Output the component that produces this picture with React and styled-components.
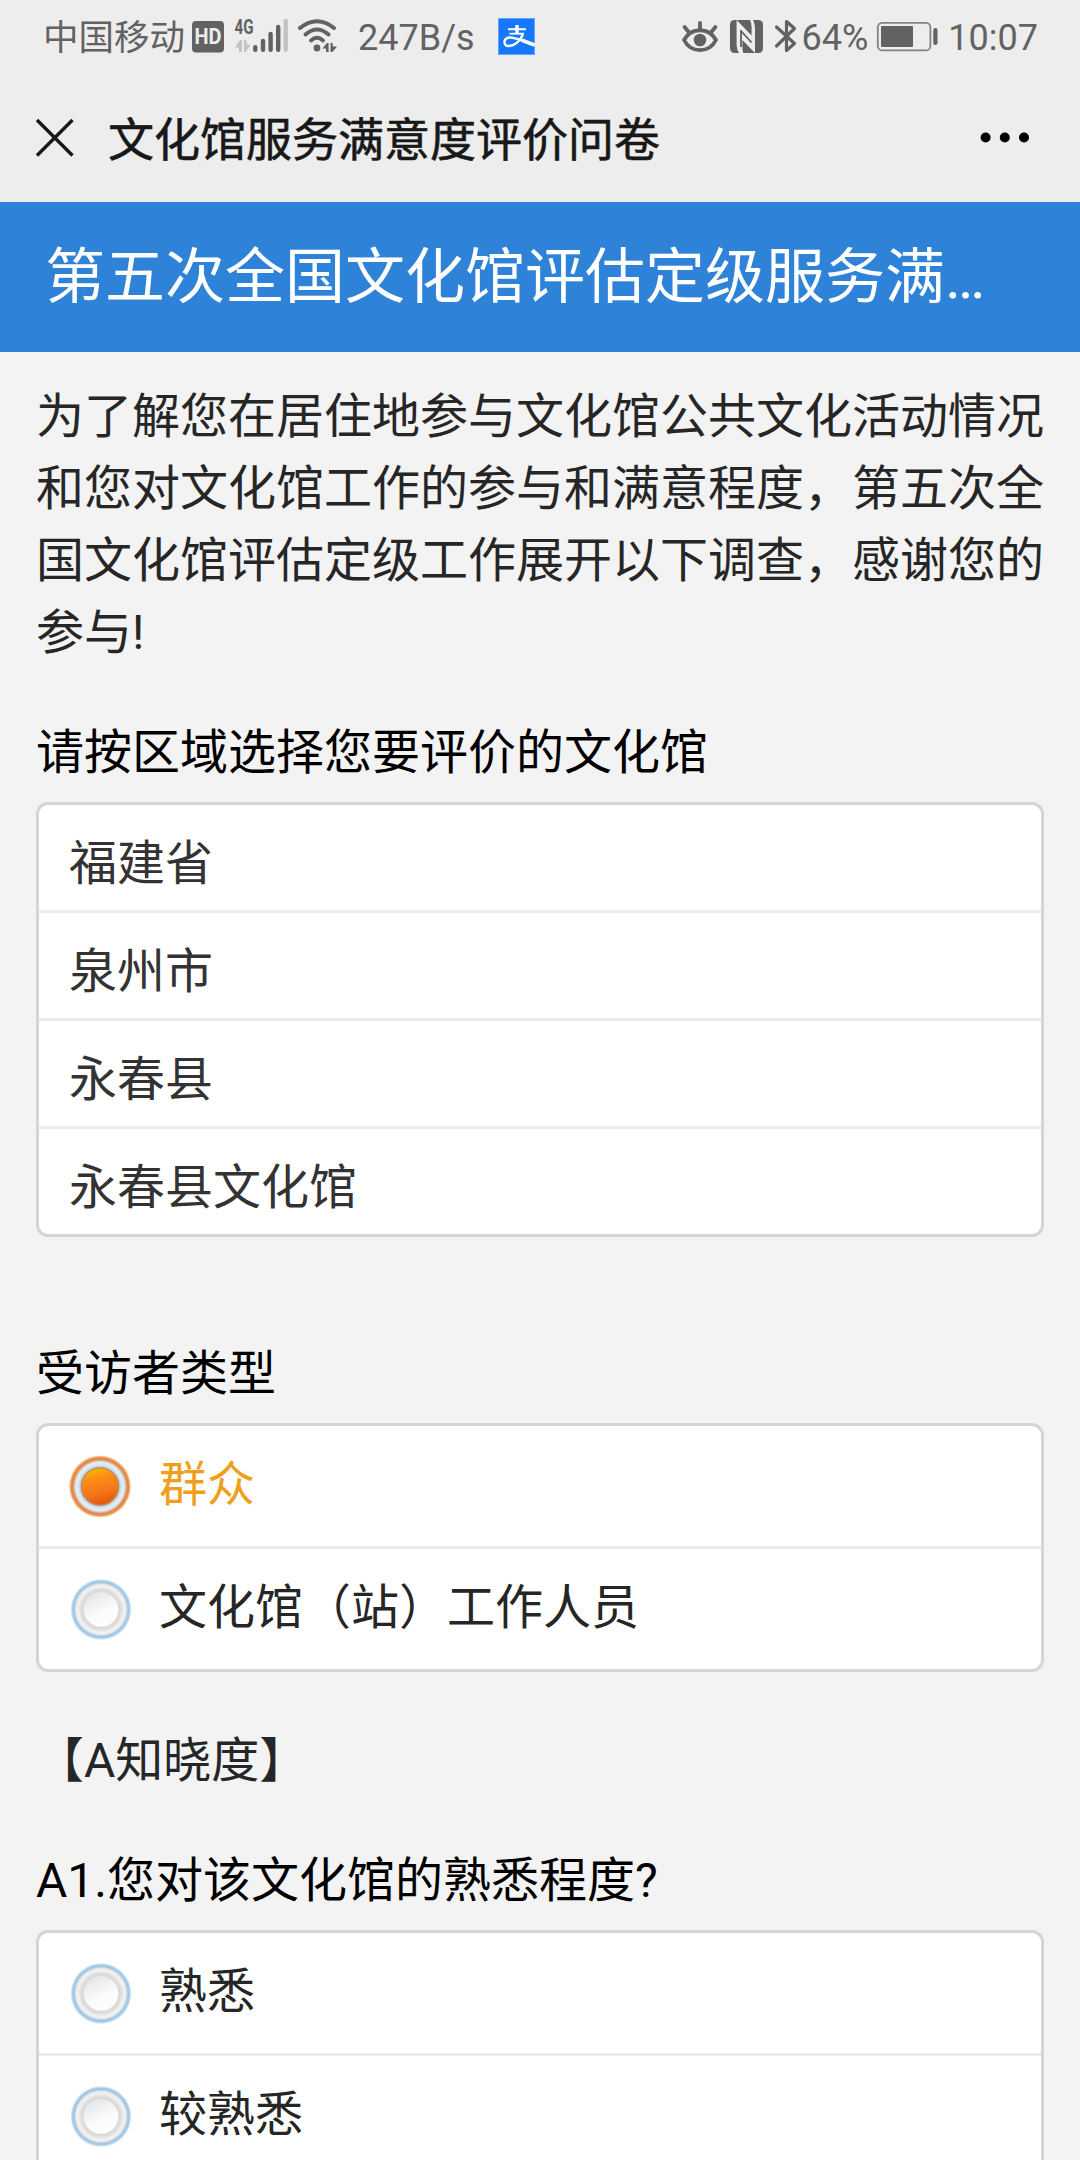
import React, { useState } from 'react';
import styled, { createGlobalStyle } from 'styled-components';

const GlobalStyle = createGlobalStyle`
  * {
    box-sizing: border-box;
  }

  body {
    margin: 0;
    background: #f3f3f3;
    font-family: Roboto, 'Noto Sans CJK SC', sans-serif;
  }
`;

const Styled = {
  Page: styled.div`
    width: 1080px;
    height: 2160px;
    overflow: hidden;
    background: #f3f3f3;
  `,
  StatusBar: styled.div`
    display: flex;
    justify-content: space-between;
    height: 74px;
    padding: 0 42px 0 43px;
    background: #ededed;
    color: #626262;
    font-size: 36px;
    line-height: 76px;
    white-space: nowrap;
  `,
  StatusGroup: styled.div`
    display: flex;

    svg {
      display: block;
      flex-shrink: 0;
      height: 74px;
    }
  `,
  Carrier: styled.span`
    margin-right: 7px;
    font-size: 35.5px;
    line-height: 77px;
  `,
  Speed: styled.span`
    margin-left: 20px;
  `,
  NavBar: styled.div`
    display: flex;
    align-items: center;
    height: 128px;
    padding: 0 46px 0 33px;
    background: #ededed;
  `,
  NavTitle: styled.div`
    flex-grow: 1;
    margin-left: 32px;
    padding-top: 4px;
    color: #181818;
    font-size: 46px;
    font-weight: 400;
    line-height: 72px;
    -webkit-text-stroke: 0.6px #181818;
  `,
  Banner: styled.h1`
    height: 150px;
    margin: 0;
    padding: 0 45px;
    background: #2e82d8;
    color: #fff;
    font-size: 60px;
    font-weight: 400;
    line-height: 152px;
    white-space: nowrap;
  `,
  Form: styled.div`
    padding: 29px 36px 0;
  `,
  Intro: styled.p`
    margin: 0;
    color: #262626;
    font-size: 48px;
    line-height: 72px;
  `,
  Question: styled.h2`
    margin: ${props => props.$top}px 0 0;
    color: #000;
    font-size: 48px;
    font-weight: 400;
    line-height: 72px;
  `,
  Section: styled.div`
    margin-top: 53px;
    color: #262626;
    font-size: 48px;
    line-height: 72px;
  `,
  List: styled.div`
    margin-top: 13px;
    border: 3px solid #d5d5d5;
    border-radius: 12px;
    background: #fff;
    overflow: hidden;
  `,
  Row: styled.div`
    display: flex;
    align-items: center;
    height: ${props => (props.$tall ? 123 : 108)}px;
    padding: ${props => (props.$tall ? '0 30px' : '12px 30px 0')};
    border-bottom: 3px solid #ebebeb;
    color: ${props => (props.$active ? '#ef9f1c' : props.$tall ? '#262626' : '#333')};
    font-size: 48px;
    line-height: 72px;
    cursor: pointer;

    &:last-child {
      height: ${props => (props.$tall ? 120 : 105)}px;
      border-bottom: 0;
    }
  `,
  Label: styled.span`
    margin: -2px 0 0 26px;
  `
};

const HdIcon = () => (
  <svg width="32" height="74" viewBox="0 0 32 74">
    <rect y="21" width="32" height="31.5" rx="4" fill="#626262" />
    <text x="2.5" y="44.3" fontSize="21.5" fontWeight="700" fill="#ededed" textLength="27" lengthAdjust="spacingAndGlyphs">
      HD
    </text>
  </svg>
);

const SignalIcon = () => (
  <svg width="74" height="74" viewBox="0 0 74 74" fill="#626262">
    <text x="10.5" y="33.5" fontSize="20.5" fontWeight="700" textLength="19" lengthAdjust="spacingAndGlyphs">
      4G
    </text>
    <path d="M11 47.5 L16 40 H18 V52 H15 V47.5 Z M20 40 H22.5 V44.5 L26.5 45 L21.5 52 H20 Z" fill="#c3c3c3" />
    <g strokeWidth="4.4" strokeLinecap="round" stroke="#626262">
      <path d="M31.3 47.3 V49.8 M39 41 V49.8 M46.6 34 V49.8 M54.2 27 V49.8" />
      <path d="M61.7 21 V49.8" stroke="#c3c3c3" />
    </g>
  </svg>
);

const WifiIcon = () => (
  <svg width="40" height="74" viewBox="0 0 40 74" fill="#626262">
    <g fill="none" stroke="#626262" strokeWidth="4" strokeLinecap="round">
      <path d="M2 28 Q19 14.5 36 28" />
      <path d="M7.5 34.5 Q19 24.5 30.5 34.5" />
      <path d="M13 40.5 Q19 35 25 40.5" />
    </g>
    <circle cx="19" cy="48" r="3.4" />
    <path d="M24.5 48.5 L28.8 43 H30.6 V52 H28 V48.5 Z M32.5 43 H34.7 V46.3 L39 46.8 L34.3 52 H32.5 Z" />
  </svg>
);

const AlipayIcon = () => (
  <svg width="60" height="74" viewBox="1 0 60 74">
    <rect x="24.5" y="18.5" width="36" height="36" fill="#1677ff" stroke="#64a4fb" />
    <g fill="none" stroke="#fff">
      <path d="M43 25 V33.5" strokeWidth="3.4" />
      <path d="M34 29.2 H52" strokeWidth="2" />
      <path d="M35.5 33.7 H50" strokeWidth="1.8" />
      <path
        d="M49 33.5 C47 41 40 46 34.5 46 C29 46 29 38.5 35 37.5 C41 37 47 40.5 61 45"
        strokeWidth="2.4"
      />
      <path d="M48 40.3 L60.5 45" strokeWidth="3.8" />
    </g>
  </svg>
);

const EyeIcon = () => (
  <svg width="36" height="74" viewBox="0 0 36 74">
    <g fill="none" stroke="#626262" strokeWidth="3.8" strokeLinecap="round">
      <path d="M2 40 C9 27 27 27 34 40 C27 53.5 9 53.5 2 40 Z" />
      <path d="M2.6 27 L7 32.5 M18 23 V30 M33.4 27 L29 32.5" />
    </g>
    <circle cx="18" cy="40" r="6.3" fill="#626262" />
  </svg>
);

const NfcIcon = () => (
  <svg width="46" height="74" viewBox="0 0 46 74">
    <rect x="12" y="20" width="33" height="33" rx="4.5" fill="#626262" />
    <path
      d="M18.6 20 L33.6 35.5 V28 C33.6 25 33 22 32 20 H35 C36.5 23 37 26 37 29 V53 L24.4 40 V47 C24.4 50 24.8 52 25.4 53 H21 C19.2 50 18.6 47 18.6 44 Z"
      fill="#ededed"
    />
    <path d="M23 30 V47 M23 31 L33.6 42.5" fill="none" stroke="#626262" strokeWidth="1.8" />
  </svg>
);

const BluetoothIcon = () => (
  <svg width="38" height="74" viewBox="0 0 38 74">
    <path
      d="M12.5 27 L30.5 43.5 L22.5 50.5 V21.5 L30.5 28.5 L12.5 46"
      fill="none"
      stroke="#626262"
      strokeWidth="3.2"
      strokeLinecap="round"
      strokeLinejoin="round"
    />
  </svg>
);

const BatteryIcon = () => (
  <svg width="80" height="74" viewBox="0 0 80 74">
    <rect x="9.8" y="22.8" width="52.6" height="27.6" rx="4.5" fill="none" stroke="#828282" strokeWidth="1.8" />
    <rect x="13" y="26" width="32" height="21" rx="1" fill="#626262" />
    <rect x="65.3" y="28" width="4.2" height="17" rx="2" fill="#626262" />
  </svg>
);

const CloseIcon = () => (
  <svg width="43" height="43" viewBox="0 0 43 43">
    <path d="M4 3 L39.5 38.5 M39.5 3 L4 38.5" stroke="#181818" strokeWidth="3.4" />
  </svg>
);

const MoreIcon = () => (
  <svg width="60" height="12" viewBox="0 0 60 12">
    <circle cx="11.6" cy="5.5" r="5" />
    <circle cx="30.8" cy="5.5" r="5" />
    <circle cx="50" cy="5.5" r="5" />
  </svg>
);

const RadioIcon = ({ checked }) => (
  <svg width="64" height="64" viewBox="0 0 64 64">
    <defs>
      <radialGradient id="ring-on">
        <stop offset="0.6" stopColor="#b5bcc6" />
        <stop offset="0.7" stopColor="#dfe8f0" />
        <stop offset="0.78" stopColor="#e6ecf1" />
        <stop offset="0.83" stopColor="#c9c4c2" />
        <stop offset="0.87" stopColor="#e08a4e" />
        <stop offset="0.93" stopColor="#ee8c3c" />
        <stop offset="1" stopColor="#fdeadb" />
      </radialGradient>
      <linearGradient id="dot-on" x1="0.35" y1="0" x2="0.6" y2="1">
        <stop offset="0" stopColor="#fbb400" />
        <stop offset="0.3" stopColor="#fb8c14" />
        <stop offset="0.65" stopColor="#f4761d" />
        <stop offset="1" stopColor="#e25304" />
      </linearGradient>
      <radialGradient id="ring-off">
        <stop offset="0.6" stopColor="#d6d7d8" />
        <stop offset="0.68" stopColor="#e2e2e2" />
        <stop offset="0.76" stopColor="#f4f3f2" />
        <stop offset="0.83" stopColor="#e6e6e7" />
        <stop offset="0.88" stopColor="#a3c6e0" />
        <stop offset="0.93" stopColor="#a0cbed" />
        <stop offset="1" stopColor="#f1f8fd" />
      </radialGradient>
      <linearGradient id="dot-off" x1="0.2" y1="0" x2="0.7" y2="1">
        <stop offset="0" stopColor="#e2e4e6" />
        <stop offset="0.6" stopColor="#fafbfb" />
        <stop offset="1" stopColor="#fff" />
      </linearGradient>
    </defs>
    {checked ? (
      <>
        <circle cx="31" cy="32.5" r="31" fill="url(#ring-on)" />
        <circle cx="31" cy="32.5" r="18.6" fill="url(#dot-on)" stroke="#b98f62" strokeWidth="1.4" />
      </>
    ) : (
      <>
        <circle cx="32" cy="32.5" r="30.5" fill="url(#ring-off)" />
        <circle cx="32" cy="32.5" r="18" fill="url(#dot-off)" stroke="#dadbdc" strokeWidth="1.4" />
      </>
    )}
  </svg>
);

const regions = ['福建省', '泉州市', '永春县', '永春县文化馆'];
const visitorTypes = ['群众', '文化馆（站）工作人员'];
const familiarity = ['熟悉', '较熟悉'];

const RadioList = ({ options, value, onChange }) => (
  <Styled.List>
    {options.map(option => (
      <Styled.Row key={option} $tall $active={option === value} onClick={() => onChange(option)}>
        <RadioIcon checked={option === value} />
        <Styled.Label>{option}</Styled.Label>
      </Styled.Row>
    ))}
  </Styled.List>
);

const App = () => {
  const [visitor, setVisitor] = useState(visitorTypes[0]);
  const [familiar, setFamiliar] = useState(null);

  return (
    <Styled.Page>
      <GlobalStyle />
      <Styled.StatusBar>
        <Styled.StatusGroup>
          <Styled.Carrier>中国移动</Styled.Carrier>
          <HdIcon />
          <SignalIcon />
          <WifiIcon />
          <Styled.Speed>247B/s</Styled.Speed>
          <AlipayIcon />
        </Styled.StatusGroup>
        <Styled.StatusGroup>
          <EyeIcon />
          <NfcIcon />
          <BluetoothIcon />
          <span>64%</span>
          <BatteryIcon />
          <span>10:07</span>
        </Styled.StatusGroup>
      </Styled.StatusBar>
      <Styled.NavBar>
        <CloseIcon />
        <Styled.NavTitle>文化馆服务满意度评价问卷</Styled.NavTitle>
        <MoreIcon />
      </Styled.NavBar>
      <Styled.Banner>第五次全国文化馆评估定级服务满…</Styled.Banner>
      <Styled.Form>
        <Styled.Intro>
          为了解您在居住地参与文化馆公共文化活动情况和您对文化馆工作的参与和满意程度，第五次全国文化馆评估定级工作展开以下调查，感谢您的参与!
        </Styled.Intro>
        <Styled.Question $top={48}>请按区域选择您要评价的文化馆</Styled.Question>
        <Styled.List>
          {regions.map(region => (
            <Styled.Row key={region}>{region}</Styled.Row>
          ))}
        </Styled.List>
        <Styled.Question $top={101}>受访者类型</Styled.Question>
        <RadioList options={visitorTypes} value={visitor} onChange={setVisitor} />
        <Styled.Section>【A知晓度】</Styled.Section>
        <Styled.Question $top={48}>A1.您对该文化馆的熟悉程度?</Styled.Question>
        <RadioList options={familiarity} value={familiar} onChange={setFamiliar} />
      </Styled.Form>
    </Styled.Page>
  );
};

export default App;
